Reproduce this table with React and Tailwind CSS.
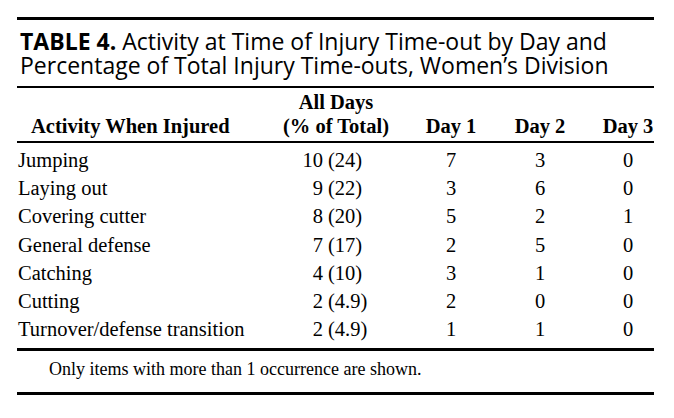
import React from "react";

const rows = [
  ["Jumping", "10", "24", "7", "3", "0"],
  ["Laying out", "9", "22", "3", "6", "0"],
  ["Covering cutter", "8", "20", "5", "2", "1"],
  ["General defense", "7", "17", "2", "5", "0"],
  ["Catching", "4", "10", "3", "1", "0"],
  ["Cutting", "2", "4.9", "2", "0", "0"],
  ["Turnover/defense transition", "2", "4.9", "1", "1", "0"],
];

const serif = { fontFamily: '"Liberation Serif", "Times New Roman", serif' };

const App = () => {
  return (
    <div className="w-[674px] h-[418px] bg-white text-black overflow-hidden pt-[17px]">
      <div className="ml-[17px] w-[637px]">
        {/* Title */}
        <div
          className="border-t-[3px] border-black pt-[10px] pb-[9px] pl-[3px] text-[23px] leading-[23.5px] whitespace-nowrap"
          style={{ fontFamily: '"Open Sans", "Noto Sans", sans-serif' }}
        >
          <div>
            <span className="font-bold">TABLE 4.</span> Activity at Time of Injury Time-out by Day and
          </div>
          <div>Percentage of Total Injury Time-outs, Women’s Division</div>
        </div>

        {/* Header */}
        <div
          className="border-t-2 border-black pt-[2px] pb-[3px] flex items-end font-bold text-[20.5px] leading-[24px] whitespace-nowrap"
          style={serif}
        >
          <div className="w-[263px] pl-[14px]">Activity When Injured</div>
          <div className="w-[112px] text-center">
            <div>All Days</div>
            <div>(% of Total)</div>
          </div>
          <div className="w-[118px] text-center">Day 1</div>
          <div className="w-[60px] text-center">Day 2</div>
          <div className="w-[84px] pl-[32px] text-center">Day 3</div>
        </div>

        {/* Body */}
        <div
          className="border-t-2 border-black pt-[3px] pb-[5px] text-[20.5px] leading-[28.2px] whitespace-nowrap"
          style={serif}
        >
          {rows.map((r) => (
            <div key={r[0]} className="flex">
              <div className="w-[263px] pl-[1px]">{r[0]}</div>
              <div className="w-[112px] flex">
                <span className="w-[43px] text-right">{r[1]}</span>
                <span className="pl-[5px]">({r[2]})</span>
              </div>
              <div className="w-[118px] text-center">{r[3]}</div>
              <div className="w-[60px] text-center">{r[4]}</div>
              <div className="w-[84px] pl-[32px] text-center">{r[5]}</div>
            </div>
          ))}
        </div>

        {/* Footnote */}
        <div
          className="border-t-[3px] border-black pt-[6px] pb-[11px] pl-[32px] text-[18px] leading-[24px] border-b-[3px]"
          style={serif}
        >
          Only items with more than 1 occurrence are shown.
        </div>
      </div>
    </div>
  );
};

export default App;
